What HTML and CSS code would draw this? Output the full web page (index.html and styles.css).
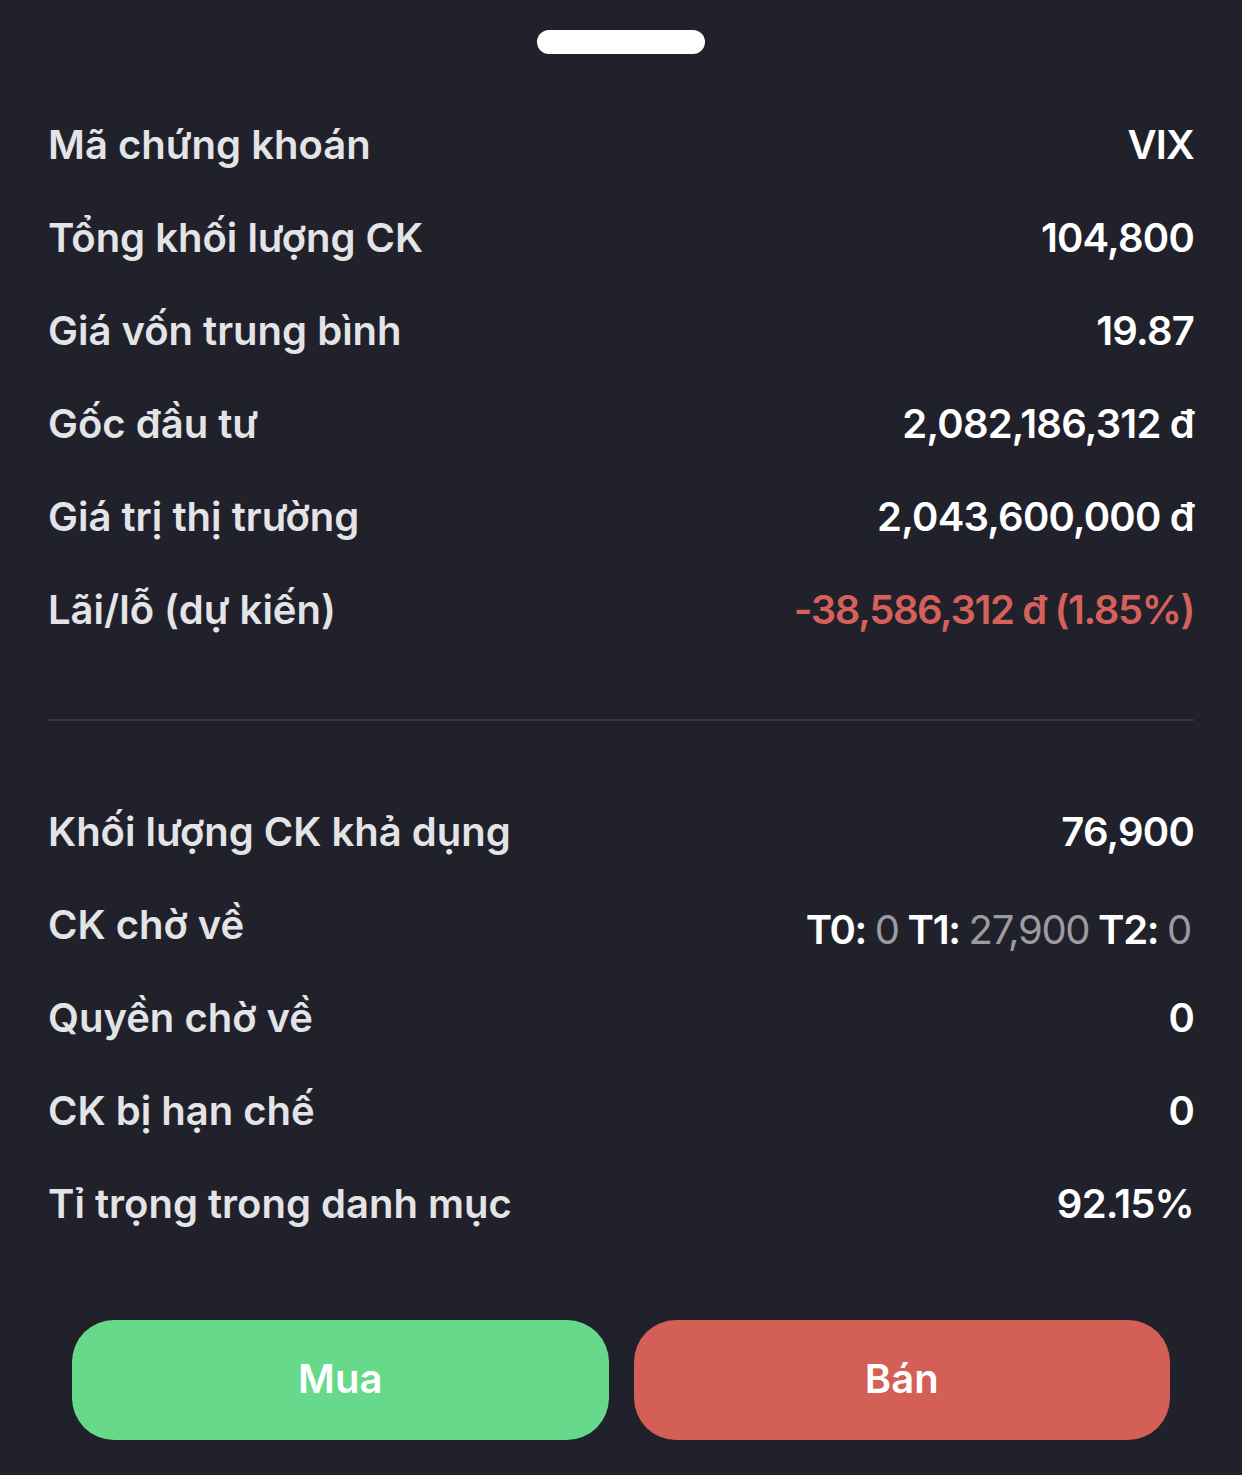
FILE: index.html
```html
<!DOCTYPE html>
<html lang="vi">
<head>
    <meta charset="UTF-8">
    <meta name="viewport" content="width=device-width, initial-scale=1.0">
    <title>Chi tiết cổ phiếu</title>
    <link rel="stylesheet" href="styles.css">
</head>
<body>
    <div class="sheet">
        <div class="handle"></div>

        <div class="info-list info-list-top">
            <div class="info-row">
                <span class="label">Mã chứng khoán</span>
                <span class="value">VIX</span>
            </div>
            <div class="info-row">
                <span class="label">Tổng khối lượng CK</span>
                <span class="value">104,800</span>
            </div>
            <div class="info-row">
                <span class="label">Giá vốn trung bình</span>
                <span class="value">19.87</span>
            </div>
            <div class="info-row">
                <span class="label">Gốc đầu tư</span>
                <span class="value">2,082,186,312 đ</span>
            </div>
            <div class="info-row">
                <span class="label">Giá trị thị trường</span>
                <span class="value">2,043,600,000 đ</span>
            </div>
            <div class="info-row">
                <span class="label">Lãi/lỗ (dự kiến)</span>
                <span class="value loss">-38,586,312 đ (1.85%)</span>
            </div>
        </div>

        <div class="divider"></div>

        <div class="info-list">
            <div class="info-row">
                <span class="label">Khối lượng CK khả dụng</span>
                <span class="value">76,900</span>
            </div>
            <div class="info-row">
                <span class="label">CK chờ về</span>
                <span class="value pending">
                    <b>T0:</b> <span class="muted">0</span>
                    <b>T1:</b> <span class="muted">27,900</span>
                    <b>T2:</b> <span class="muted">0</span>
                </span>
            </div>
            <div class="info-row">
                <span class="label">Quyền chờ về</span>
                <span class="value">0</span>
            </div>
            <div class="info-row">
                <span class="label">CK bị hạn chế</span>
                <span class="value">0</span>
            </div>
            <div class="info-row">
                <span class="label">Tỉ trọng trong danh mục</span>
                <span class="value">92.15%</span>
            </div>
        </div>

        <div class="actions">
            <button class="btn btn-buy">Mua</button>
            <button class="btn btn-sell">Bán</button>
        </div>
    </div>
</body>
</html>
```

FILE: styles.css
```css
body {
    margin: 0;
    background: #21212c;
    font-family: 'Inter', 'Noto Sans', sans-serif;
    color: #fff;
}

.sheet {
    padding: 30px 48px 35px;
}

.handle {
    width: 168px;
    height: 24px;
    margin: 0 auto;
    background: #fff;
    border-radius: 12px;
}

.info-list {
    display: flex;
    flex-direction: column;
}

.info-list-top {
    margin-top: 44px;
}

.info-row {
    height: 93px;
    display: flex;
    justify-content: space-between;
    align-items: center;
    font-size: 40px;
    font-weight: 600;
}

.label {
    color: #e4e4e6;
}

.value {
    color: #fff;
    letter-spacing: -0.8px;
}

.value.loss {
    color: #d6605a;
    letter-spacing: -1.4px;
}

.value.pending {
    padding-top: 10px;
    padding-right: 3px;
    letter-spacing: -1.3px;
}

.pending b {
    font-weight: 600;
}

.pending .muted {
    color: #9b9ba0;
    font-weight: 400;
}

.divider {
    height: 2px;
    background: #36363c;
    margin: 63px 0 64px;
}

.actions {
    display: flex;
    gap: 25px;
    margin: 70px 24px 0;
}

.btn {
    flex: 1;
    height: 120px;
    border: none;
    border-radius: 42px;
    font-family: inherit;
    font-size: 40px;
    font-weight: 600;
    color: #fff;
    padding-bottom: 4px;
}

.btn-buy {
    background: #66d98b;
}

.btn-sell {
    background: #d45f57;
}
```
